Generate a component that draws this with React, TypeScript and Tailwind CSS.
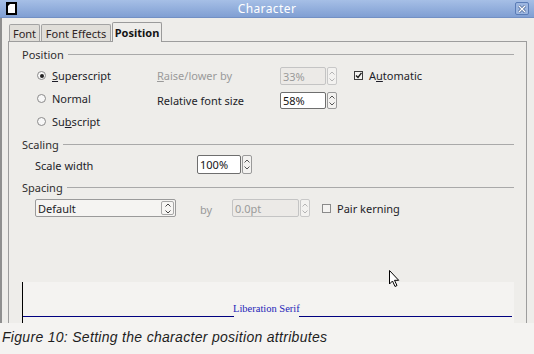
import React from "react";

function Chev({ up, color }: { up?: boolean; color: string }) {
  return (
    <svg width="6" height="4" viewBox="0 0 6 4" className="block">
      {up ? (
        <path d="M0.5 3.5 L3 1 L5.5 3.5" fill="none" stroke={color} strokeWidth="1" />
      ) : (
        <path d="M0.5 0.5 L3 3 L5.5 0.5" fill="none" stroke={color} strokeWidth="1" />
      )}
    </svg>
  );
}

function Spin({ value, disabled, w, h }: { value: string; disabled?: boolean; w: string; h: string }) {
  const c = disabled ? "#b4b4b4" : "#555555";
  return (
    <div className={`flex gap-[1px] ${w} ${h}`}>
      <div
        className={`flex-1 flex items-center pl-[2px] rounded-[2px] border text-[11px] leading-none ${
          disabled ? "border-[#c4c4c4] text-[#9a9a9a] bg-[#eceae7]" : "border-[#6e6e6e] text-[#151515] bg-white"
        }`}
      >
        {value}
      </div>
      <div
        className={`w-[10px] flex flex-col items-center justify-center gap-[3px] rounded-[2px] border ${
          disabled ? "border-[#c8c8c8]" : "border-[#9a9a9a]"
        } bg-[#f3f2f0]`}
      >
        <Chev up color={c} />
        <Chev color={c} />
      </div>
    </div>
  );
}

function Radio({ on }: { on?: boolean }) {
  return (
    <div className="w-[9px] h-[9px] rounded-full border border-[#8a8a8a] bg-[#f7f7f7] flex items-center justify-center">
      {on && <div className="w-[4px] h-[4px] rounded-full bg-[#222]" />}
    </div>
  );
}

function Check({ on }: { on?: boolean }) {
  return (
    <div
      className={`w-[9px] h-[9px] border ${on ? "border-[#3c3c3c]" : "border-[#8a8a8a]"} bg-[#f4f3f1] flex items-center justify-center`}
    >
      {on && (
        <svg width="7" height="7" viewBox="0 0 7 7">
          <path d="M1 3.5 L3 5.5 L6.5 0.8" fill="none" stroke="#1a1a1a" strokeWidth="1.4" />
        </svg>
      )}
    </div>
  );
}

function Header({ label, mt }: { label: string; mt: string }) {
  return (
    <div className={`${mt} h-[14px] flex items-center gap-[4px]`}>
      <span className="text-[11px] leading-none text-[#2e2e2e]">{label}</span>
      <div className="flex-1 h-px bg-[#a9a9a9]" />
    </div>
  );
}

export default function App() {
  const txt = "text-[11px] leading-none text-[#1d1d28]";
  return (
    <div className="w-[534px] h-[354px] bg-[#f4f3f1] flex flex-col overflow-hidden font-['Noto_Sans',sans-serif]">
      {/* window */}
      <div className="h-[323px] flex flex-col bg-[#eeedea] relative">
        {/* title bar */}
        <div className="h-[18px] grid grid-cols-[1fr_auto_1fr] items-center bg-linear-to-b from-[#a6bfe6] to-[#809fd3] border-b border-[#7290c4]">
          <div className="pl-[6px] flex items-center">
            <svg width="11" height="13" viewBox="0 0 11 13">
              <path d="M1 1 H10 V12 H1 Z" fill="#ffffff" stroke="#000" strokeWidth="2" />
              <path d="M0 0 H6 L0 6 Z" fill="#000" />
            </svg>
          </div>
          <div className="text-[12px] leading-none text-white tracking-[0.4px]">Character</div>
          <div className="flex justify-end pr-[5px]">
            <div className="w-[14px] h-[13px] rounded-[2px] border border-[#5a7cb6] bg-[#9cb6e0] flex items-center justify-center">
              <svg width="8" height="8" viewBox="0 0 8 8">
                <path d="M1 1 L7 7 M7 1 L1 7" stroke="#3d5a8c" strokeWidth="2.6" />
                <path d="M1 1 L7 7 M7 1 L1 7" stroke="#ffffff" strokeWidth="1.4" />
              </svg>
            </div>
          </div>
        </div>

        {/* body */}
        <div className="flex-1 flex flex-col border-l-2 border-[#8f8f8f] pl-[6px] pr-[7px]">
          {/* tabs */}
          <div className="mt-[4px] h-[19px] flex items-end pl-[1px]">
            <div className="w-[31px] h-[17px] flex items-center justify-center border border-b-0 border-[#a3a3a3] rounded-t-[2px] bg-[#e0ded9] text-[11px] leading-none text-[#2f2525]">
              Font
            </div>
            <div className="ml-[1px] w-[70px] h-[17px] flex items-center justify-center border border-b-0 border-[#a3a3a3] rounded-t-[2px] bg-[#e0ded9] text-[11px] leading-none text-[#2f2525]">
              Font Effects
            </div>
            <div className="ml-[1px] w-[50px] h-[20px] -mb-px relative z-10 flex items-center justify-center border border-b-0 border-[#9a9a9a] rounded-t-[2px] bg-[#eeedea] text-[11px] leading-none font-bold text-[#151515]">
              Position
            </div>
          </div>

          {/* panel */}
          <div className="flex-1 flex flex-col border border-b-0 border-[#9d9d9d] pl-[13px] pr-[12px]">
            <Header label="Position" mt="mt-[5px]" />
            <div className="mt-[3px] flex pl-[15px]">
              <div className="w-[120px] flex flex-col">
                <div className="h-[23px] flex items-center gap-[6px]">
                  <Radio on />
                  <span className={txt}>
                    <span className="underline">S</span>uperscript
                  </span>
                </div>
                <div className="h-[23px] flex items-center gap-[6px]">
                  <Radio />
                  <span className={txt}>Normal</span>
                </div>
                <div className="h-[23px] flex items-center gap-[6px]">
                  <Radio />
                  <span className={txt}>
                    Su<span className="underline">b</span>script
                  </span>
                </div>
              </div>
              <div className="w-[123px] flex flex-col">
                <div className="h-[23px] flex items-center">
                  <span className="text-[11px] leading-none text-[#9a9a9a]">
                    <span className="underline">R</span>aise/lower by
                  </span>
                </div>
                <div className="h-[26px] flex items-center">
                  <span className={txt}>Relative font size</span>
                </div>
              </div>
              <div className="w-[74px] flex flex-col">
                <div className="mt-[3px]">
                  <Spin value="33%" disabled w="w-[57px]" h="h-[18px]" />
                </div>
                <div className="mt-[7px]">
                  <Spin value="58%" w="w-[57px]" h="h-[17px]" />
                </div>
              </div>
              <div className="flex flex-col">
                <div className="h-[23px] flex items-center gap-[6px]">
                  <Check on />
                  <span className={txt}>
                    A<span className="underline">u</span>tomatic
                  </span>
                </div>
              </div>
            </div>

            <Header label="Scaling" mt="mt-[4px]" />
            <div className="mt-[3px] h-[20px] flex items-center pl-[13px]">
              <div className="w-[162px]">
                <span className={txt}>Scale width</span>
              </div>
              <Spin value="100%" w="w-[55px]" h="h-[19px]" />
            </div>

            <Header label="Spacing" mt="mt-[6px]" />
            <div className="mt-[5px] h-[18px] flex items-center pl-[13px]">
              <div className="w-[141px] h-[18px] flex items-center rounded-[2px] border border-[#9a9a9a] bg-[#f5f4f2] pl-[2px] pr-[1px]">
                <span className={`flex-1 ${txt}`}>Default</span>
                <div className="w-[13px] h-[14px] flex flex-col items-center justify-center gap-[3px] rounded-[2px] border border-[#a8a8a8] bg-[#f7f6f4]">
                  <Chev up color="#444" />
                  <Chev color="#444" />
                </div>
              </div>
              <div className="ml-[24px] w-[32px]">
                <span className="text-[11px] leading-none text-[#9a9a9a]">by</span>
              </div>
              <Spin value="0.0pt" disabled w="w-[78px]" h="h-[18px]" />
              <div className="ml-[12px] flex items-center gap-[6px]">
                <Check />
                <span className={txt}>Pair kerning</span>
              </div>
            </div>

            {/* preview */}
            <div className="mt-auto h-[41px] flex items-end border-l border-black bg-[#f4f3f1] pb-[6px] pr-[2px]">
              <div className="w-[211px] h-px bg-[#000080]" />
              <span className="mb-[3px] mx-[-1px] font-['Liberation_Serif',serif] text-[10.5px] leading-none text-[#2424b8]">
                Liberation Serif
              </span>
              <div className="flex-1 h-px bg-[#000080]" />
            </div>
          </div>
        </div>

        {/* mouse cursor */}
        <svg className="absolute left-[389px] top-[270px]" width="12" height="18" viewBox="0 0 12 18">
          <path
            d="M0.5 0.5 L0.5 14 L3.5 11 L6 16.5 L8 15.5 L5.5 10.3 L9.7 10.3 Z"
            fill="#ffffff"
            stroke="#000000"
            strokeWidth="1"
          />
        </svg>
      </div>

      {/* caption */}
      <div className="pl-[2px] pt-[5px] font-['Liberation_Sans',sans-serif] italic text-[14px] leading-[18px] tracking-[0.3px] text-[#1e1e1e]">
        Figure 10: Setting the character position attributes
      </div>
    </div>
  );
}
